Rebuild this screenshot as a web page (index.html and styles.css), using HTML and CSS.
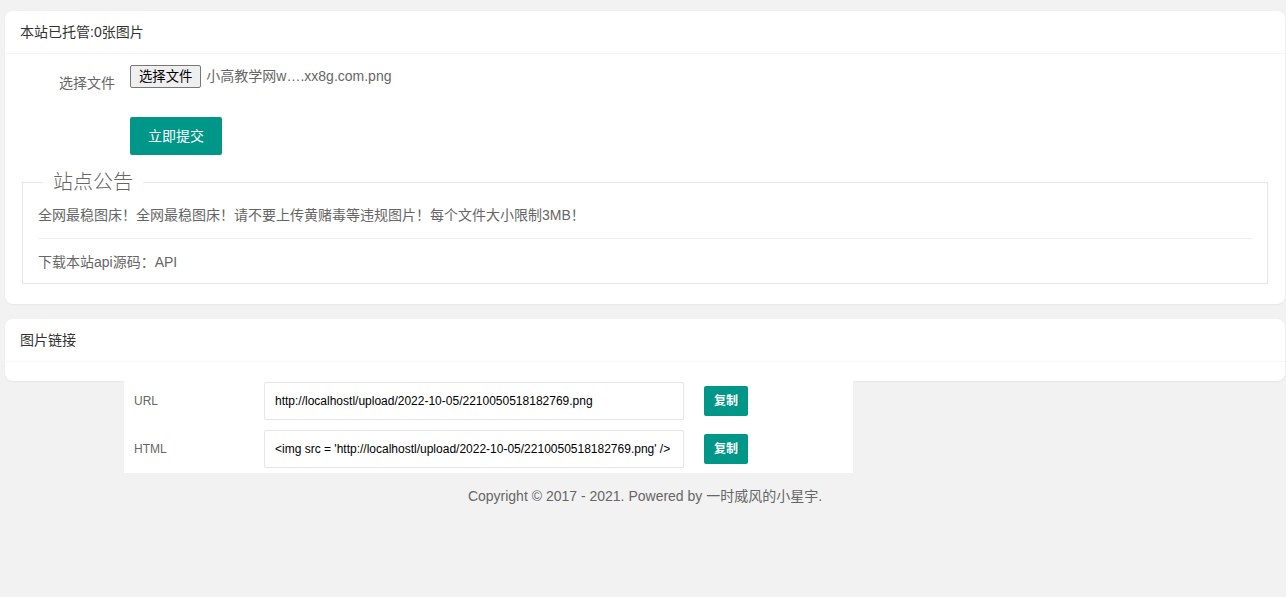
FILE: index.html
```html
<!DOCTYPE html>
<html lang="zh-CN">
<head>
<meta charset="utf-8">
<title>图床</title>
<link rel="stylesheet" href="styles.css">
</head>
<body>
<div class="page">
  <div class="card">
    <div class="card-header">本站已托管:0张图片</div>
    <div class="card-body">
      <div class="form-item">
        <label class="form-label">选择文件</label>
        <div class="input-block">
          <span class="file-btn">选择文件</span><span class="file-name">小高教学网w….xx8g.com.png</span>
        </div>
      </div>
      <div class="form-item">
        <div class="input-block offset">
          <button class="btn">立即提交</button>
        </div>
      </div>
      <fieldset class="field">
        <legend>站点公告</legend>
        <div class="field-box">
          <div class="line">全网最稳图床！全网最稳图床！请不要上传黄赌毒等违规图片！每个文件大小限制3MB！</div>
          <hr class="hr">
          <div class="line">下载本站api源码：API</div>
        </div>
      </fieldset>
    </div>
  </div>

  <div class="card card-links">
    <div class="card-header">图片链接</div>
    <div class="card-body short"></div>
  </div>

  <div class="links">
    <div class="link-row first">
      <div class="link-label">URL</div>
      <div class="link-input"><input class="text-input" type="text" value="http://localhostl/upload/2022-10-05/2210050518182769.png" readonly></div>
      <div class="link-act"><button class="btn btn-sm">复制</button></div>
    </div>
    <div class="link-row">
      <div class="link-label">HTML</div>
      <div class="link-input"><input class="text-input" type="text" value="<img src = 'http://localhostl/upload/2022-10-05/2210050518182769.png' />" readonly></div>
      <div class="link-act"><button class="btn btn-sm">复制</button></div>
    </div>
  </div>

  <div class="footer">Copyright © 2017 - 2021. Powered by 一时威风的小星宇.</div>
</div>
</body>
</html>
```

FILE: styles.css
```css
html, body {
  margin: 0;
  padding: 0;
  background: #f2f2f2;
}
body {
  font-family: "Liberation Sans", Arial, "Noto Sans CJK SC", sans-serif;
  font-size: 14px;
  color: #333;
}
.page {
  padding: 11px 1px 0 5px;
}
.card {
  background: #fff;
  border-radius: 8px;
  box-shadow: 0 1px 2px 0 rgba(0, 0, 0, 0.05);
}
.card-links {
  margin-top: 15px;
}
.card-header {
  height: 42px;
  line-height: 42px;
  padding: 0 15px;
  border-bottom: 1px solid #f6f6f6;
  font-size: 14px;
  color: #333;
}
.card-body {
  padding: 10px 15px;
}
.card-body.short {
  padding-bottom: 9px;
}
.form-item {
  display: flex;
  margin-bottom: 15px;
  min-height: 38px;
}
.form-label {
  width: 80px;
  padding: 9px 15px;
  line-height: 20px;
  text-align: right;
  color: #666;
  font-size: 14px;
  flex: none;
}
.input-block {
  display: flex;
  align-items: center;
  height: 23px;
  margin-top: 1px;
}
.input-block.offset {
  margin-left: 110px;
  height: 38px;
  margin-top: 0;
}
.file-btn {
  display: inline-block;
  box-sizing: border-box;
  height: 23px;
  line-height: 21px;
  padding: 0 8px;
  border: 1px solid #767676;
  border-radius: 2px;
  background: #efefef;
  color: #000;
  font-size: 13.33px;
}
.file-name {
  margin-left: 5px;
  color: #666;
  font-size: 14px;
  line-height: 23px;
}
.btn {
  height: 38px;
  line-height: 38px;
  padding: 0 18px;
  border: none;
  border-radius: 2px;
  background: #009688;
  color: #fff;
  font-size: 14px;
  font-family: inherit;
  cursor: pointer;
}
.btn-sm {
  height: 30px;
  line-height: 30px;
  padding: 0 10px;
  font-size: 12px;
  font-weight: bold;
}
.field {
  margin: 0 2px 10px;
  padding: 0;
  border: 1px solid #e6e6e6;
}
.field legend {
  margin-left: 20px;
  padding: 0 10px;
  font-size: 20px;
  line-height: 24px;
  font-weight: 300;
  color: #666;
}
.field-box {
  padding: 9px 15px;
}
.line {
  line-height: 24px;
  color: #666;
  font-size: 14px;
}
.hr {
  height: 1px;
  margin: 11px 0;
  border: 0;
  background: #eee;
}
.links {
  width: 729px;
  margin-left: 119px;
  background: #fff;
}
.link-row {
  display: flex;
  align-items: center;
  height: 48px;
}
.link-row.first {
  height: 44px;
  align-items: flex-start;
  padding-top: 1px;
  box-sizing: border-box;
}
.link-row.first .link-act {
  padding-top: 4px;
}
.link-row.first .link-label {
  line-height: 38px;
}
.link-label {
  width: 120px;
  padding-left: 10px;
  font-size: 12px;
  color: #666;
}
.link-input {
  width: 420px;
  padding: 0 10px;
}
.text-input {
  display: block;
  box-sizing: border-box;
  width: 420px;
  height: 38px;
  padding: 0 10px;
  border: 1px solid #e6e6e6;
  border-radius: 2px;
  background: #fff;
  color: #000;
  font-size: 12px;
  font-family: "Liberation Sans", Arial, sans-serif;
  outline: none;
}
.link-act {
  padding: 0 10px;
}
.footer {
  margin-top: 11px;
  line-height: 24px;
  text-align: center;
  color: #666;
  font-size: 14px;
}
```
